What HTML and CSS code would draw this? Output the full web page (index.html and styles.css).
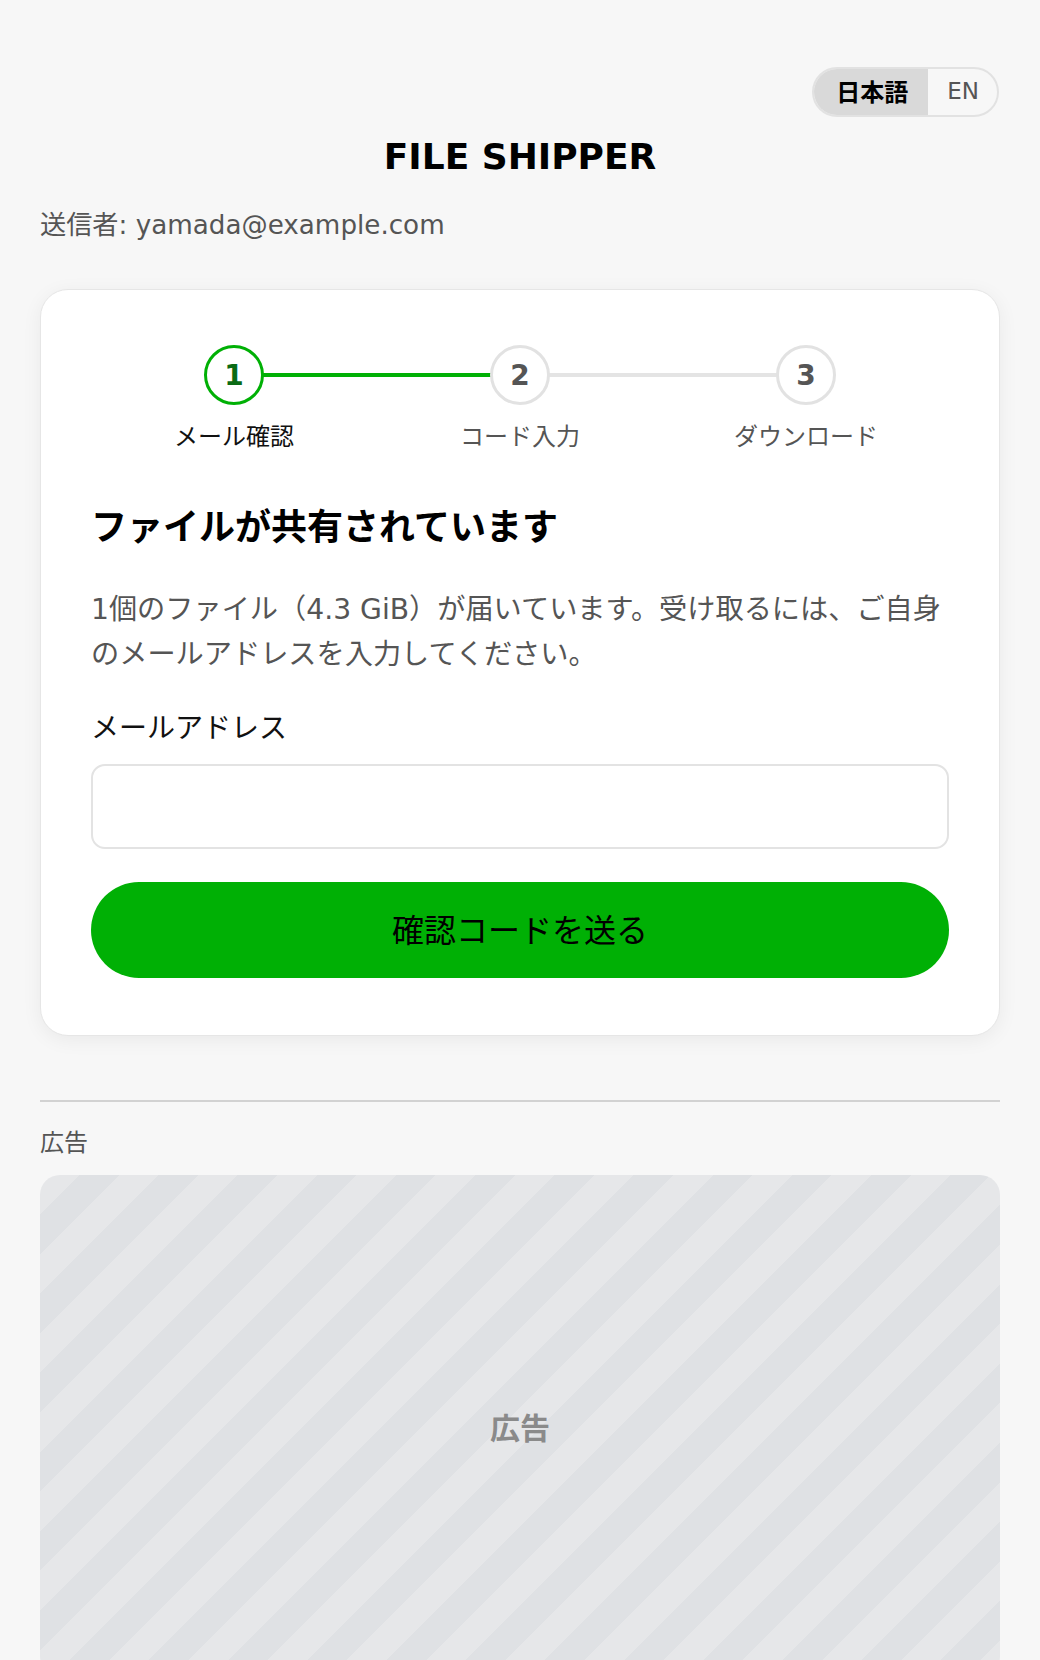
FILE: index.html
```html
<!DOCTYPE html>
<html lang="ja">
<head>
<meta charset="utf-8">
<title>FILE SHIPPER</title>
<link rel="stylesheet" href="styles.css">
</head>
<body>
<div class="page">
  <div class="lang-row">
    <div class="lang-toggle">
      <span class="lang-opt active">日本語</span>
      <span class="lang-opt">EN</span>
    </div>
  </div>
  <h1 class="brand">FILE SHIPPER</h1>
  <p class="sender">送信者: yamada@example.com</p>

  <section class="card">
    <div class="stepper">
      <div class="step done">
        <div class="circle">1</div>
        <div class="step-label">メール確認</div>
      </div>
      <div class="step">
        <div class="circle">2</div>
        <div class="step-label">コード入力</div>
      </div>
      <div class="step last">
        <div class="circle">3</div>
        <div class="step-label">ダウンロード</div>
      </div>
    </div>

    <h2 class="heading">ファイルが共有されています</h2>
    <p class="desc">1個のファイル（4.3 GiB）が届いています。受け取るには、ご自身のメールアドレスを入力してください。</p>

    <label class="field-label" for="email">メールアドレス</label>
    <input class="field-input" id="email" type="email">

    <button class="primary-btn" type="button">確認コードを送る</button>
  </section>

  <hr class="divider">
  <div class="ad-label">広告</div>
  <div class="ad-box"><span class="ad-text">広告</span></div>
</div>
</body>
</html>
```

FILE: styles.css
```css
* { box-sizing: border-box; }

html, body {
  margin: 0;
  padding: 0;
  background: #f7f7f7;
}

body {
  font-family: "DejaVu Sans", "Noto Sans CJK JP", sans-serif;
  color: #111;
}

.page {
  max-width: 1040px;
  padding: 67px 40px 0;
}

.lang-row {
  display: flex;
  justify-content: flex-end;
}

.lang-toggle {
  display: flex;
  height: 50px;
  border: 2px solid #e2e2e2;
  border-radius: 25px;
  overflow: hidden;
  margin-right: 1px;
}

.lang-opt {
  display: flex;
  align-items: center;
  justify-content: center;
  font-size: 23px;
  color: #555;
  padding: 0 18px 3px 19px;
}

.lang-opt.active {
  background: #d9d9d9;
  color: #000;
  font-weight: bold;
  padding: 0 20px 4px 22px;
  font-size: 24px;
}

.brand {
  margin: 18px 0 0;
  font-size: 36px;
  line-height: 44px;
  font-weight: bold;
  text-align: center;
  color: #000;
}

.sender {
  margin: 28px 0 0;
  font-size: 26.2px;
  line-height: 36px;
  color: #555;
}

.card {
  margin-top: 46px;
  background: #fff;
  border: 1px solid #e6e6e6;
  border-radius: 28px;
  box-shadow: 0 4px 20px rgba(0, 0, 0, 0.06);
  padding: 55px 50px 57px;
  display: flex;
  flex-direction: column;
}

.stepper {
  display: grid;
  grid-template-columns: repeat(3, 1fr);
}

.step {
  position: relative;
  display: flex;
  flex-direction: column;
  align-items: center;
}

.step::after {
  content: "";
  position: absolute;
  top: 28px;
  left: 50%;
  width: 100%;
  height: 4px;
  background: #e4e4e4;
  z-index: 0;
}

.step.done::after { background: #00b005; }
.step.last::after { display: none; }

.circle {
  position: relative;
  z-index: 1;
  width: 60px;
  height: 60px;
  border-radius: 50%;
  border: 3px solid #e2e2e2;
  background: #fff;
  display: flex;
  align-items: center;
  justify-content: center;
  font-size: 28px;
  font-weight: bold;
  color: #555;
}

.step.done .circle {
  border-color: #00b005;
  color: #0a6b14;
}

.step-label {
  margin-top: 16px;
  font-size: 24px;
  line-height: 32px;
  color: #555;
}

.step.done .step-label { color: #111; }

.heading {
  margin: 51px 0 0;
  font-size: 36px;
  line-height: 48px;
  font-weight: bold;
  color: #000;
}

.desc {
  margin: 35px 0 0;
  font-size: 28.2px;
  line-height: 45px;
  color: #555;
}

.field-label {
  margin-top: 32px;
  font-size: 28px;
  line-height: 40px;
  color: #111;
}

.field-input {
  margin-top: 15px;
  width: 100%;
  height: 85px;
  border: 2px solid #e3e3e3;
  border-radius: 14px;
  background: #fff;
  font: inherit;
  font-size: 28px;
  padding: 0 20px;
  outline: none;
}

.primary-btn {
  margin-top: 33px;
  width: 100%;
  height: 96px;
  border: none;
  border-radius: 48px;
  background: #00b005;
  color: #000;
  font-family: inherit;
  font-size: 32px;
  padding: 0 0 5px;
  cursor: pointer;
}

.divider {
  margin: 64px 0 0;
  border: none;
  height: 2px;
  background: #d2d2d2;
}

.ad-label {
  margin-top: 25px;
  font-size: 24px;
  line-height: 32px;
  color: #555;
}

.ad-box {
  margin-top: 16px;
  height: 502px;
  border-radius: 20px;
  background: repeating-linear-gradient(135deg, #e6e7e9 0 28px, #dfe1e4 28px 56px);
  display: flex;
  align-items: center;
  justify-content: center;
}

.ad-text {
  font-size: 30px;
  font-weight: bold;
  color: #8a8a8a;
}
```
